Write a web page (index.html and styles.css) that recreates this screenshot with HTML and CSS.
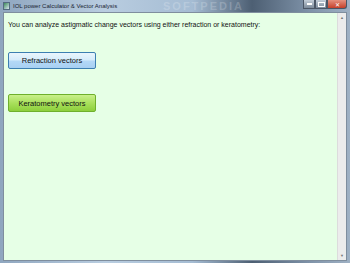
FILE: index.html
```html
<!DOCTYPE html>
<html lang="en">

<head>
    <meta charset="UTF-8">
    <title>IOL power Calculator &amp; Vector Analysis</title>
    <link rel="stylesheet" href="styles.css">
</head>

<body>
    <div class="window">
        <div class="titlebar">
            <span class="app-icon"></span>
            <span class="title">IOL power Calculator &amp; Vector Analysis</span>
            <span class="watermark">SOFTPEDIA</span>
            <div class="controls">
                <span class="ctl min"><i></i></span>
                <span class="ctl max"><i></i></span>
                <span class="ctl close">&#x2715;</span>
            </div>
        </div>

        <div class="client">
            <div class="content">
                <p class="intro">You can analyze astigmatic change vectors using either refraction or keratometry:</p>
                <button class="btn blue">Refraction vectors</button>
                <button class="btn green">Keratometry vectors</button>
            </div>
            <div class="scrollbar">
                <span class="arrow">&#9650;</span>
                <span class="arrow">&#9660;</span>
            </div>
        </div>
    </div>
</body>

</html>
```

FILE: styles.css
```css
body {
    margin: 0;
    padding: 0;
    font-family: 'Liberation Sans', Arial, sans-serif;
    background-color: #8a9cb0;
}

.window {
    width: 350px;
    height: 263px;
    display: flex;
    flex-direction: column;
    background: linear-gradient(90deg, #8fa6bf 0%, #b9cde0 30%, #a5bcd3 55%, #4d5f73 72%, #7d91a7 88%, #9fb1c4 100%);
    padding: 0 3px 2px 3px;
    box-sizing: border-box;
}

.titlebar {
    height: 12px;
    display: flex;
    align-items: center;
    position: relative;
    color: #1a2433;
    font-size: 6px;
}

.app-icon {
    width: 5px;
    height: 6px;
    margin: 0 3px 0 0;
    background: linear-gradient(135deg, #3d8a5a, #d8e6f0);
    border: 1px solid #536a80;
}

.title {
    white-space: nowrap;
}

.watermark {
    position: absolute;
    left: 160px;
    top: 0;
    font-size: 11px;
    font-weight: bold;
    letter-spacing: 2px;
    color: rgba(255, 255, 255, 0.2);
}

.controls {
    margin-left: auto;
    display: flex;
    align-self: flex-start;
    height: 9px;
}

.ctl {
    display: flex;
    align-items: center;
    justify-content: center;
    width: 12px;
    height: 9px;
    background: linear-gradient(#c3ced9, #7c8b9b);
    border: 1px solid #4a5666;
    border-top: none;
    box-sizing: border-box;
}

.ctl i {
    display: block;
    width: 5px;
    height: 2px;
    background: #fff;
}

.ctl.max i {
    height: 3px;
    background: none;
    border: 1px solid #fff;
}

.ctl.close {
    width: 20px;
    background: linear-gradient(#e5907e, #c5402a);
    color: #fff;
    font-size: 6px;
    border-radius: 0 0 3px 0;
}

.client {
    flex: 1;
    display: flex;
    background-color: #e6ffe6;
    border: 1px solid #7f8e9e;
}

.content {
    flex: 1;
    padding: 8px 0 0 4px;
}

.intro {
    margin: 0 0 24px 0;
    font-size: 7px;
    color: #111;
}

.btn {
    display: block;
    width: 88px;
    height: 17px;
    padding: 0;
    font-family: 'Liberation Sans', Arial, sans-serif;
    font-size: 7.5px;
    color: #111;
    border-radius: 2px;
    cursor: pointer;
}

.btn.blue {
    margin-bottom: 25px;
    background: linear-gradient(#eaf5fd 0%, #d6ecfb 45%, #b3d8f6 55%, #a8d0f2 100%);
    border: 1px solid #3c7fb1;
}

.btn.green {
    background: linear-gradient(#c9f08a 0%, #a9e05c 50%, #8dcf3c 100%);
    border: 1px solid #6fb02c;
    height: 18px;
}

.scrollbar {
    width: 8px;
    background-color: #ececec;
    border-left: 1px solid #dcdcdc;
    display: flex;
    flex-direction: column;
    justify-content: space-between;
    align-items: center;
    padding: 2px 0;
}

.arrow {
    font-size: 4px;
    color: #777;
}
```
